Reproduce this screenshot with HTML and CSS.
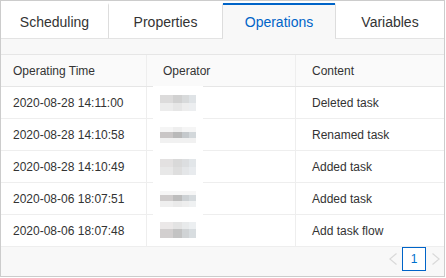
FILE: index.html
```html
<!DOCTYPE html>
<html lang="en">
<head>
  <meta charset="UTF-8">
  <title>Task Operations</title>
  <link rel="stylesheet" href="styles.css">
</head>
<body>
  <div class="panel">
    <!-- Tabs -->
    <div class="tabs">
      <div class="tab">Scheduling</div>
      <div class="tab">Properties</div>
      <div class="tab active">Operations</div>
      <div class="tab">Variables</div>
    </div>
    <div class="band"></div>

    <!-- Operation log -->
    <div class="log">
      <div class="row head">
        <div class="cell">Operating Time</div>
        <div class="cell">Operator</div>
        <div class="cell">Content</div>
      </div>
      <div class="row">
        <div class="cell">2020-08-28 14:11:00</div>
        <div class="cell op">
          <span class="blur">
            <svg width="36" height="16" viewBox="0 0 36 16">
              <rect x="0" y="0" width="13" height="8" fill="#dcdbdb"/>
              <rect x="13" y="0" width="9" height="8" fill="#d1d1d1"/>
              <rect x="22" y="0" width="7" height="8" fill="#d8dadb"/>
              <rect x="29" y="0" width="7" height="8" fill="#dfe3e6"/>
              <rect x="0" y="8" width="13" height="8" fill="#ececec"/>
              <rect x="13" y="8" width="9" height="8" fill="#e6e6e6"/>
              <rect x="22" y="8" width="7" height="8" fill="#ededed"/>
              <rect x="29" y="8" width="7" height="8" fill="#eceef0"/>
            </svg>
          </span>
        </div>
        <div class="cell">Deleted task</div>
      </div>
      <div class="row">
        <div class="cell">2020-08-28 14:10:58</div>
        <div class="cell op">
          <span class="blur">
            <svg width="36" height="16" viewBox="0 0 36 16">
              <rect x="0" y="0" width="36" height="5" fill="#f5f5f5"/>
              <rect x="13" y="0" width="9" height="5" fill="#eeeeee"/>
              <rect x="0" y="5" width="13" height="6" fill="#c9c6c6"/>
              <rect x="13" y="5" width="9" height="6" fill="#b9b9b9"/>
              <rect x="22" y="5" width="7" height="6" fill="#c5c9cc"/>
              <rect x="29" y="5" width="7" height="6" fill="#d3d8db"/>
              <rect x="0" y="11" width="36" height="5" fill="#f1f1f1"/>
            </svg>
          </span>
        </div>
        <div class="cell">Renamed task</div>
      </div>
      <div class="row">
        <div class="cell">2020-08-28 14:10:49</div>
        <div class="cell op">
          <span class="blur">
            <svg width="36" height="16" viewBox="0 0 36 16">
              <rect x="0" y="0" width="13" height="8" fill="#e3e1e1"/>
              <rect x="13" y="0" width="9" height="8" fill="#d9d9d9"/>
              <rect x="22" y="0" width="7" height="8" fill="#dcdee0"/>
              <rect x="29" y="0" width="7" height="8" fill="#e2e6e9"/>
              <rect x="0" y="8" width="13" height="8" fill="#e8e8e8"/>
              <rect x="13" y="8" width="9" height="8" fill="#dedede"/>
              <rect x="22" y="8" width="7" height="8" fill="#e4e6e8"/>
              <rect x="29" y="8" width="7" height="8" fill="#e8ebee"/>
            </svg>
          </span>
        </div>
        <div class="cell">Added task</div>
      </div>
      <div class="row">
        <div class="cell">2020-08-06 18:07:51</div>
        <div class="cell op">
          <span class="blur">
            <svg width="36" height="16" viewBox="0 0 36 16">
              <rect x="0" y="0" width="36" height="4" fill="#f6f6f6"/>
              <rect x="0" y="4" width="13" height="6" fill="#cfcccc"/>
              <rect x="13" y="4" width="9" height="6" fill="#bdbdbd"/>
              <rect x="22" y="4" width="7" height="6" fill="#cdd1d4"/>
              <rect x="29" y="4" width="7" height="6" fill="#d6dbde"/>
              <rect x="0" y="10" width="13" height="6" fill="#efefef"/>
              <rect x="13" y="10" width="9" height="6" fill="#eaeaea"/>
              <rect x="22" y="10" width="7" height="6" fill="#eeeeee"/>
              <rect x="29" y="10" width="7" height="6" fill="#eff1f2"/>
            </svg>
          </span>
        </div>
        <div class="cell">Added task</div>
      </div>
      <div class="row last">
        <div class="cell">2020-08-06 18:07:48</div>
        <div class="cell op">
          <span class="blur">
            <svg width="36" height="16" viewBox="0 0 36 16">
              <rect x="0" y="0" width="13" height="7" fill="#ebe8e8"/>
              <rect x="13" y="0" width="9" height="7" fill="#e3e3e3"/>
              <rect x="22" y="0" width="7" height="7" fill="#e8eaeb"/>
              <rect x="29" y="0" width="7" height="7" fill="#eceff1"/>
              <rect x="0" y="7" width="13" height="9" fill="#d2cfcf"/>
              <rect x="13" y="7" width="9" height="9" fill="#c3c3c3"/>
              <rect x="22" y="7" width="7" height="9" fill="#d0d3d5"/>
              <rect x="29" y="7" width="7" height="9" fill="#d8dde0"/>
            </svg>
          </span>
        </div>
        <div class="cell">Add task flow</div>
      </div>
    </div>

    <!-- Pagination -->
    <div class="pager">
      <span class="page-btn prev">
        <svg width="8" height="12" viewBox="0 0 8 12"><polyline points="7.5,0.5 0.8,6 7.5,11.5" fill="none" stroke="#d9d9d9" stroke-width="1.2"/></svg>
      </span>
      <span class="page-num">1</span>
      <span class="page-btn next">
        <svg width="8" height="12" viewBox="0 0 8 12"><polyline points="0.5,0.5 7.2,6 0.5,11.5" fill="none" stroke="#d9d9d9" stroke-width="1.2"/></svg>
      </span>
    </div>
  </div>
</body>
</html>
```

FILE: styles.css
```css
/* Base */
body {
  margin: 0;
  font-family: "Liberation Sans", Arial, sans-serif;
  color: #333;
  background-color: #fff;
}
.panel {
  width: 445px;
  height: 277px;
  box-sizing: border-box;
  border: 1px solid #cccccc;
  overflow: hidden;
  display: flex;
  flex-direction: column;
}
/* Tabs */
.tabs {
  display: grid;
  grid-template-columns: 108px 114px 112px 1fr;
  padding-top: 2px;
}
.tab {
  height: 33px;
  border-top: 2px solid transparent;
  border-bottom: 1px solid #e3e3e3;
  border-right: 1px solid #dddddd;
  display: flex;
  align-items: center;
  justify-content: center;
  font-size: 14px;
  color: #333;
}
.tab:last-child {
  border-right: none;
}
.tab.active {
  border-top-color: #0064c8;
  border-bottom-color: transparent;
  border-right: none;
  background-color: #f8f8f8;
  color: #0064c8;
}
.tab.active + .tab {
  border-left: 1px solid #dddddd;
}
.band {
  height: 15px;
  background-color: #f8f8f8;
}
/* Log table */
.log {
  border-top: 1px solid #e6e6e6;
}
.row {
  display: grid;
  grid-template-columns: 146px 149px 1fr;
  height: 31px;
  border-bottom: 1px solid #eeeeee;
  font-size: 12px;
}
.row.head {
  background-color: #fafafa;
  border-bottom-color: #e6e6e6;
}
.cell {
  display: flex;
  align-items: center;
  padding-left: 16px;
  border-right: 1px solid #eeeeee;
}
.cell:first-child {
  padding-left: 12px;
}
.cell:last-child {
  border-right: none;
}
.cell.op {
  padding-left: 6px;
  align-items: stretch;
}
.blur {
  width: 50px;
  margin: -1px 0;
  background-color: #fff;
  display: flex;
  align-items: center;
  justify-content: center;
}
.row.last .blur {
  margin-bottom: 0;
}
/* Pagination */
.pager {
  flex: 1;
  display: flex;
  justify-content: flex-end;
  align-items: flex-start;
  background-color: #f8f8f8;
}
.page-btn {
  height: 24px;
  display: flex;
  align-items: center;
}
.page-btn.prev {
  width: 22px;
  justify-content: flex-end;
  padding-right: 5px;
  box-sizing: border-box;
}
.page-btn.next {
  width: 18px;
  padding-left: 6px;
  box-sizing: border-box;
}
.page-num {
  width: 24px;
  height: 24px;
  box-sizing: border-box;
  border: 1px solid #0064c8;
  background-color: #fff;
  color: #0070cc;
  font-size: 12px;
  display: flex;
  align-items: center;
  justify-content: center;
}
```
